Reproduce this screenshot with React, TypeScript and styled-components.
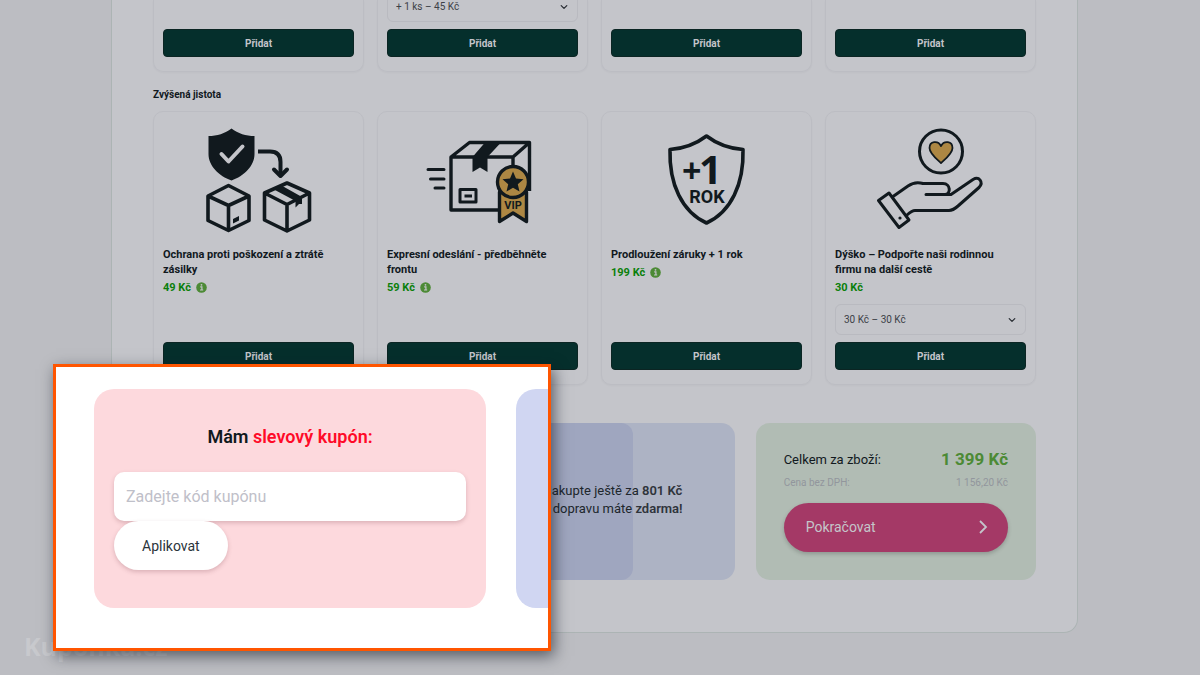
import React, { useState } from 'react';
import styled, { createGlobalStyle } from 'styled-components';

const Global = createGlobalStyle`
  *, *::before, *::after { box-sizing: border-box; }
  body {
    margin: 0;
    background: #bcbdc2;
    color: #11191e;
    font-family: Roboto, "Liberation Sans", sans-serif;
    overflow: hidden;
  }
  button, input, select { font-family: inherit; }
  h2, h3, p { margin: 0; }
`;

const Page = styled.div`
  position: relative;
  height: 100vh;
  overflow: hidden;
  padding: 0 122px 0 111px;
`;

const Panel = styled.main`
  padding: 0 41px 52px;
  background: #c4c5ca;
  border: 1px solid #acb4b4;
  border-top: 0;
  border-radius: 0 0 14px 14px;
`;

const CardGrid = styled.div`
  display: grid;
  grid-template-columns: repeat(4, minmax(0, 1fr));
  gap: 13px;
`;

const Card = styled.article<{ $cut?: boolean }>`
  display: flex;
  flex-direction: column;
  justify-content: flex-end;
  ${(p) => (p.$cut ? 'height: 72px;' : 'min-height: 274px;')}
  padding: ${(p) => (p.$cut ? '0 9px 14px' : '10px 9px 14px')};
  border: 1px solid #bcbdc3;
  border-top-width: ${(p) => (p.$cut ? '0' : '1px')};
  border-radius: ${(p) => (p.$cut ? '0 0 10px 10px' : '10px')};
  box-shadow: 0 1px 2px rgba(0, 0, 0, 0.03);
`;

const GroupTitle = styled.h2`
  padding: 16px 0 10px;
  font-size: 10px;
  line-height: 13px;
  font-weight: 700;
`;

const Art = styled.div`
  height: 118px;
  margin-bottom: 7px;
  display: flex;
  justify-content: center;
  svg { display: block; width: 141px; height: 118px; }
`;

const CardTitle = styled.h3`
  padding-right: 12px;
  font-size: 11px;
  line-height: 15px;
  font-weight: 700;
`;

const Price = styled.p`
  display: flex;
  align-items: center;
  gap: 5px;
  margin-top: 3px;
  color: #0a7f0b;
  font-size: 11px;
  line-height: 15px;
  font-weight: 700;
`;

const CardFoot = styled.div`
  display: flex;
  flex-direction: column;
  flex-shrink: 0;
  gap: 7px;
  margin-top: auto;
`;

const SelectWrap = styled.label`
  position: relative;
  display: block;
  svg {
    position: absolute;
    right: 10px;
    top: 50%;
    margin-top: -4px;
    pointer-events: none;
  }
`;

const Select = styled.select`
  display: block;
  appearance: none;
  width: 100%;
  height: 31px;
  padding: 0 8px;
  border: 1px solid #b9bac0;
  border-radius: 6px;
  background: #c4c5ca;
  color: #3c4147;
  font-size: 10px;
`;

const AddButton = styled.button`
  height: 28px;
  border: 1px solid #0b2523;
  border-radius: 4px;
  background: #052f2c;
  color: #c4c5ca;
  font-size: 10px;
  line-height: 13px;
  font-weight: 700;
`;

const SummaryGrid = styled.div`
  display: grid;
  grid-template-columns: repeat(3, minmax(0, 1fr));
  gap: 21px;
  margin-top: 38px;
`;

const Summary = styled.section<{ $tone: string }>`
  position: relative;
  display: flex;
  flex-direction: column;
  justify-content: center;
  min-height: 157px;
  padding: 24px 28px 28px;
  border-radius: 14px;
  background: ${(p) => p.$tone};
  overflow: hidden;
`;

const Progress = styled.div`
  position: absolute;
  inset: 0 auto 0 0;
  border-radius: 0 12px 12px 0;
  background: #9fa6bf;
`;

const Shipping = styled.div`
  position: relative;
  display: flex;
  align-items: center;
  justify-content: center;
  gap: 4px;
  font-size: 13px;
  line-height: 18px;
  color: #20262c;
  strong { font-weight: 600; color: #2f343b; }
`;

const TotalRow = styled.div<{ $muted?: boolean }>`
  display: flex;
  align-items: center;
  justify-content: space-between;
  color: ${(p) => (p.$muted ? '#92969d' : '#11191e')};
  font-size: ${(p) => (p.$muted ? '10px' : '13px')};
  line-height: 23px;
`;

const Total = styled.strong`
  color: #4c8a35;
  font-size: 17px;
`;

const Continue = styled.button`
  display: flex;
  align-items: center;
  justify-content: space-between;
  height: 49px;
  margin-top: 9px;
  padding: 0 20px 0 22px;
  border: 0;
  border-radius: 25px;
  background: #a43966;
  color: #c4c5ca;
  font-size: 14px;
  box-shadow: 0 2px 4px rgba(0, 0, 0, 0.2);
`;

const Watermark = styled.div`
  position: absolute;
  left: 24px;
  bottom: 12px;
  color: #c8c9cd;
  font-family: "Open Sans", sans-serif;
  font-size: 25px;
  line-height: 34px;
  font-weight: 700;
`;

const Callout = styled.aside`
  position: absolute;
  left: 53px;
  top: 364px;
  display: flex;
  gap: 30px;
  width: 498px;
  padding: 22px 0 40px 38px;
  border: 3px solid #ff5500;
  background: #fff;
  box-shadow: 3px 5px 14px rgba(20, 25, 35, 0.6);
  overflow: hidden;
`;

const Coupon = styled.form`
  flex: 0 0 392px;
  min-height: 219px;
  padding: 35px 20px 38px;
  border-radius: 20px;
  background: #fdd9dd;
`;

const CouponTitle = styled.h2`
  margin-bottom: 23px;
  font-size: 18px;
  line-height: 25px;
  font-weight: 600;
  text-align: center;
  span { color: #ff0a28; }
`;

const CouponInput = styled.input`
  display: block;
  width: 100%;
  height: 49px;
  padding: 0 12px;
  border: 0;
  border-radius: 10px;
  background: #fff;
  font-size: 16px;
  box-shadow: 0 2px 4px rgba(120, 60, 70, 0.25);
  &::placeholder { color: #bfc0c9; opacity: 1; }
`;

const Apply = styled.button`
  height: 49px;
  padding: 0 28px;
  border: 0;
  border-radius: 25px;
  background: #fff;
  color: #2b343b;
  font-size: 14px;
  box-shadow: 0 2px 4px rgba(120, 60, 70, 0.25);
`;

const NextCard = styled.div`
  flex: 0 0 392px;
  border-radius: 20px;
  background: #d0d6f2;
`;

const ink = '#11191e';
const gold = '#ad8743';

const Chevron = () => (
  <svg width="8" height="8" viewBox="0 0 8 8" fill="none" stroke="#252a30" strokeWidth="1.2" strokeLinecap="round" strokeLinejoin="round">
    <path d="M1.2 2.6 4 5.4 6.8 2.6" />
  </svg>
);

const Info = () => (
  <svg width="11" height="11" viewBox="0 0 11 11" aria-label="Informace">
    <circle cx="5.5" cy="5.5" r="5.3" fill="#4c8a35" />
    <path d="M4.2 4.8h1.700V7.800M4 8h3.200" fill="none" stroke="#c4c5ca" strokeWidth="1.200" />
    <circle cx="5.5" cy="2.8" r=".9" fill="#c4c5ca" />
  </svg>
);

/* Each drawing uses a 141 x 118 canvas. */
const ProtectArt = () => (
  <svg viewBox="0 0 141 118" fill="none" stroke={ink} strokeWidth="3.6" strokeLinejoin="round">
    <path d="M43.5 6.5C50 11.5 58 14 66.5 14V32C66.5 44 56 54 43.5 58.5C31 54 20.5 44 20.5 32V14C29 14 37 11.5 43.5 6.5Z" fill={ink} stroke="none" />
    <path d="M33.5 32 40.5 39.5 54.5 24.5" stroke="#c4c5ca" strokeWidth="4" strokeLinecap="round" />
    <path d="M70 29.5H82C89 29.500 92.500 33 92.500 40V54" strokeWidth="4" />
    <path d="M86 47.5 92.5 54 99 47.5" strokeWidth="4" strokeLinecap="round" />
    <path d="M40.5 63.5 61 74V98.5L40.5 108.5 20 98.5V74ZM20 74 40.5 83.5 61 74M40.5 83.5V108.5" />
    <path d="M45 97 51 94V98.5L45 101.500Z" fill={ink} stroke="none" />
    <path d="M99 61 121.5 71V98L99 109 76.5 98V71ZM76.5 71 99 82.5 121.5 71M99 82.5V109" />
    <path d="M86 67.5 93.500 63.500 114 75V82L111 82 107.500 85.500V79Z" fill={ink} stroke="none" />
  </svg>
);

const ExpressArt = () => (
  <svg viewBox="0 0 141 118" fill="none" stroke={ink} strokeWidth="3.4" strokeLinejoin="round">
    <path d="M16 47.5H32M18.5 57H32M23 66H32" strokeLinecap="round" strokeWidth="3" />
    <path d="M39 35H101V88H39ZM39 35 57.5 20.500H117.500L101 35M117.500 20.500V69" />
    <path d="M60.500 35 73 20.500H89L75.500 35V50L68 45.500 60.500 50Z" fill={ink} stroke="none" />
    <path d="M48 67.5H64V80H48ZM52.500 74H60" strokeWidth="3" />
    <path d="M87.500 70V99.5L101 91 114.500 99.5V70Z" fill={gold} />
    <circle cx="101" cy="60" r="15.5" fill={gold} />
    <path d="M101 49.5 104 56.5 111.500 57.3 105.800 62.200 107.500 69.600 101 65.700 94.500 69.600 96.200 62.200 90.500 57.300 98 56.500Z" fill={ink} stroke="none" />
    <text x="101" y="87" textAnchor="middle" fill={ink} stroke="none" fontFamily="Roboto, sans-serif" fontWeight="700" fontSize="11">VIP</text>
  </svg>
);

const WarrantyArt = () => (
  <svg viewBox="0 0 141 118" fill="none" stroke={ink} strokeWidth="3.6" strokeLinejoin="round">
    <path d="M70.5 14C81 22 93 26.5 107 27.5C108 62 95 90 70.5 101C46 90 33 62 34 27.5C48 26.5 60 22 70.5 14Z" />
    <g fill={ink} stroke="none" fontWeight="700">
      <text x="46" y="61" fontSize="34" fontFamily="'Noto Sans', sans-serif">+</text>
      <text x="63" y="62" fontSize="40" fontFamily="'Noto Sans', sans-serif">1</text>
      <text x="71" y="81" fontSize="18" fontFamily="Roboto, sans-serif" textAnchor="middle">ROK</text>
    </g>
  </svg>
);

const TipArt = () => (
  <svg viewBox="1 0 141 118" fill="none" stroke={ink} strokeWidth="3" strokeLinejoin="round" strokeLinecap="round">
    <circle cx="82" cy="29.5" r="21.5" />
    <path d="M82 41C77 36.5 70.5 31.5 70.5 26C70.5 19 79 18 82 24C85 18 93.5 19 93.5 26C93.5 31.5 87 36.5 82 41Z" fill={gold} strokeWidth="1.8" />
    <path d="M19.5 78.500 30 71 50 98 40 105.500Z" />
    <circle cx="41" cy="96" r="1.6" fill={ink} stroke="none" />
    <path d="M34 74.5 49 64Q56 59 64 61.5H84C92 61.5 92 72.5 86 72.5H67M86 72.5H92L114 57.5C120 54 125 60 120 65.5L99 84Q94 88.5 90 88.5H56Q53 88.5 48 93" />
  </svg>
);

type Product = { title: string; price: string; info?: boolean; option?: string; art: React.ReactNode };

const products: Product[] = [
  { title: 'Ochrana proti poškození a ztrátě zásilky', price: '49 Kč', info: true, art: <ProtectArt /> },
  { title: 'Expresní odeslání - předběhněte frontu', price: '59 Kč', info: true, art: <ExpressArt /> },
  { title: 'Prodloužení záruky + 1 rok', price: '199 Kč', info: true, art: <WarrantyArt /> },
  { title: 'Dýško – Podpořte naši rodinnou firmu na další cestě', price: '30 Kč', option: '30 Kč – 30 Kč', art: <TipArt /> },
];

const CardActions = ({ option }: { option?: string }) => (
  <CardFoot>
    {option && (
      <SelectWrap>
        <Select aria-label="Varianta"><option>{option}</option></Select>
        <Chevron />
      </SelectWrap>
    )}
    <AddButton type="button">Přidat</AddButton>
  </CardFoot>
);

export default function App() {
  const [code, setCode] = useState('');
  return (
    <Page>
      <Global />
      <Panel>
        <CardGrid>
          {[undefined, '+ 1 ks – 45 Kč', undefined, undefined].map((option, i) => (
            <Card key={i} $cut><CardActions option={option} /></Card>
          ))}
        </CardGrid>
        <GroupTitle>Zvýšená jistota</GroupTitle>
        <CardGrid>
          {products.map((p) => (
            <Card key={p.title}>
              <Art>{p.art}</Art>
              <CardTitle>{p.title}</CardTitle>
              <Price>{p.price}{p.info && <Info />}</Price>
              <CardActions option={p.option} />
            </Card>
          ))}
        </CardGrid>
        <SummaryGrid>
          <Summary $tone="#c3a8ae" />
          <Summary $tone="#adb3c4">
            <Progress style={{ width: `${(1399 / 2200) * 100}%` }} />
            <Shipping>
              <svg width="32" height="24" viewBox="0 0 32 24" fill="none" stroke={ink} strokeWidth="1.5">
                <path d="M2 4h17v14H2zM19 9h6l5 5v4H19" /><circle cx="8" cy="19" r="2.5" /><circle cx="24" cy="19" r="2.5" />
              </svg>
              <p>Nakupte ještě za <strong>801 Kč</strong><br />a dopravu máte <strong>zdarma!</strong></p>
            </Shipping>
          </Summary>
          <Summary $tone="#b1bcb4">
            <TotalRow><span>Celkem za zboží:</span><Total>1 399 Kč</Total></TotalRow>
            <TotalRow $muted><span>Cena bez DPH:</span><span>1 156,20 Kč</span></TotalRow>
            <Continue type="button">
              Pokračovat
              <svg width="10" height="14" viewBox="0 0 10 14" fill="none" stroke="currentColor" strokeWidth="1.8"><path d="M2 1 8 7 2 13" /></svg>
            </Continue>
          </Summary>
        </SummaryGrid>
      </Panel>
      <Watermark>Kuponka.cz</Watermark>
      <Callout>
        <Coupon onSubmit={(e) => e.preventDefault()}>
          <CouponTitle>Mám <span>slevový kupón:</span></CouponTitle>
          <CouponInput aria-label="Kód kupónu" placeholder="Zadejte kód kupónu" value={code} onChange={(e) => setCode(e.target.value)} />
          <Apply type="submit">Aplikovat</Apply>
        </Coupon>
        <NextCard />
      </Callout>
    </Page>
  );
}
